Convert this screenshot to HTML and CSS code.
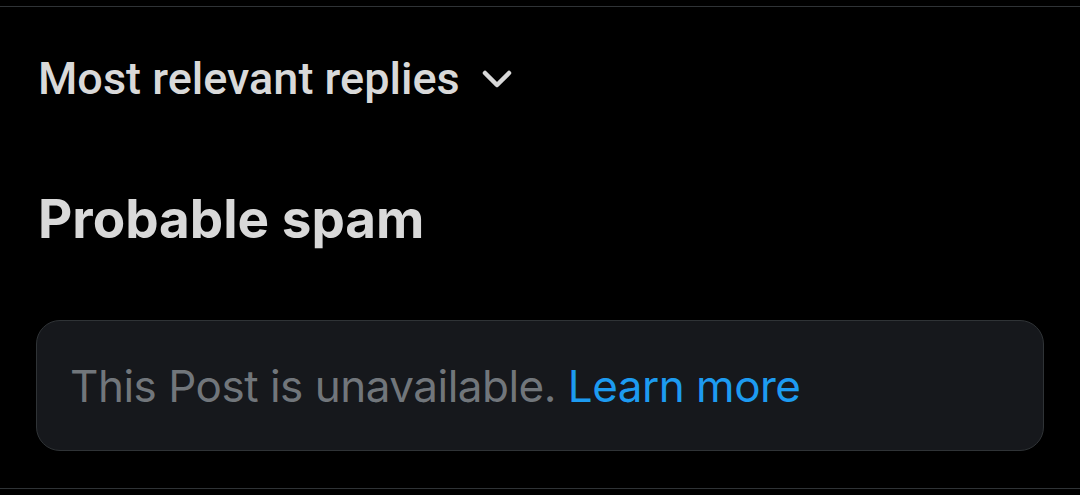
FILE: index.html
```html
<!DOCTYPE html>
<html lang="en">

<head>
    <meta charset="UTF-8">
    <title>Replies</title>
    <link rel="stylesheet" href="styles.css">
</head>

<body>
    <div class="thread">
        <div class="rule top-rule"></div>

        <div class="sort-row">
            <span class="sort-label">Most relevant replies</span>
            <svg class="chevron" width="30" height="20" viewBox="0 0 30 20">
                <polyline points="3,4 15,16 27,4" fill="none" stroke="#d9d9d9" stroke-width="4.5" stroke-linecap="round" stroke-linejoin="round"/>
            </svg>
        </div>

        <h2 class="section-title">Probable spam</h2>

        <div class="notice-card">
            <span class="notice-text">This Post is unavailable. <a href="#" class="notice-link">Learn more</a></span>
        </div>

        <div class="rule bottom-rule"></div>
    </div>
</body>

</html>
```

FILE: styles.css
```css
:root {
    --border-color: #2f3336;
    --text-color: #d9d9d9;
    --muted-color: #71767b;
    --link-color: #1d9bf0;
}

body {
    margin: 0;
    background-color: #000;
    width: 1080px;
    height: 495px;
    overflow: hidden;
}

.thread {
    display: flex;
    flex-direction: column;
}

.rule {
    height: 1px;
    background-color: var(--border-color);
}

.top-rule {
    margin-top: 6px;
}

.sort-row {
    display: flex;
    align-items: center;
    gap: 22px;
    padding: 0 38px;
    margin-top: 44px;
    height: 56px;
}

.sort-label {
    font-family: Roboto, sans-serif;
    font-weight: 500;
    font-size: 45px;
    line-height: 56px;
    color: var(--text-color);
}

.section-title {
    margin: 80px 0 0;
    padding: 0 38px;
    font-family: Inter, sans-serif;
    font-weight: 700;
    font-size: 53px;
    line-height: 64px;
    color: var(--text-color);
}

.notice-card {
    box-sizing: border-box;
    margin: 69px 36px 0;
    height: 131px;
    display: flex;
    align-items: center;
    padding: 0 33px;
    background-color: #16181c;
    border: 1px solid var(--border-color);
    border-radius: 24px;
}

.notice-text {
    font-family: Inter, sans-serif;
    font-size: 44px;
    letter-spacing: -0.5px;
    color: var(--muted-color);
}

.notice-link {
    color: var(--link-color);
    text-decoration: none;
}

.bottom-rule {
    margin-top: 37px;
}
```
